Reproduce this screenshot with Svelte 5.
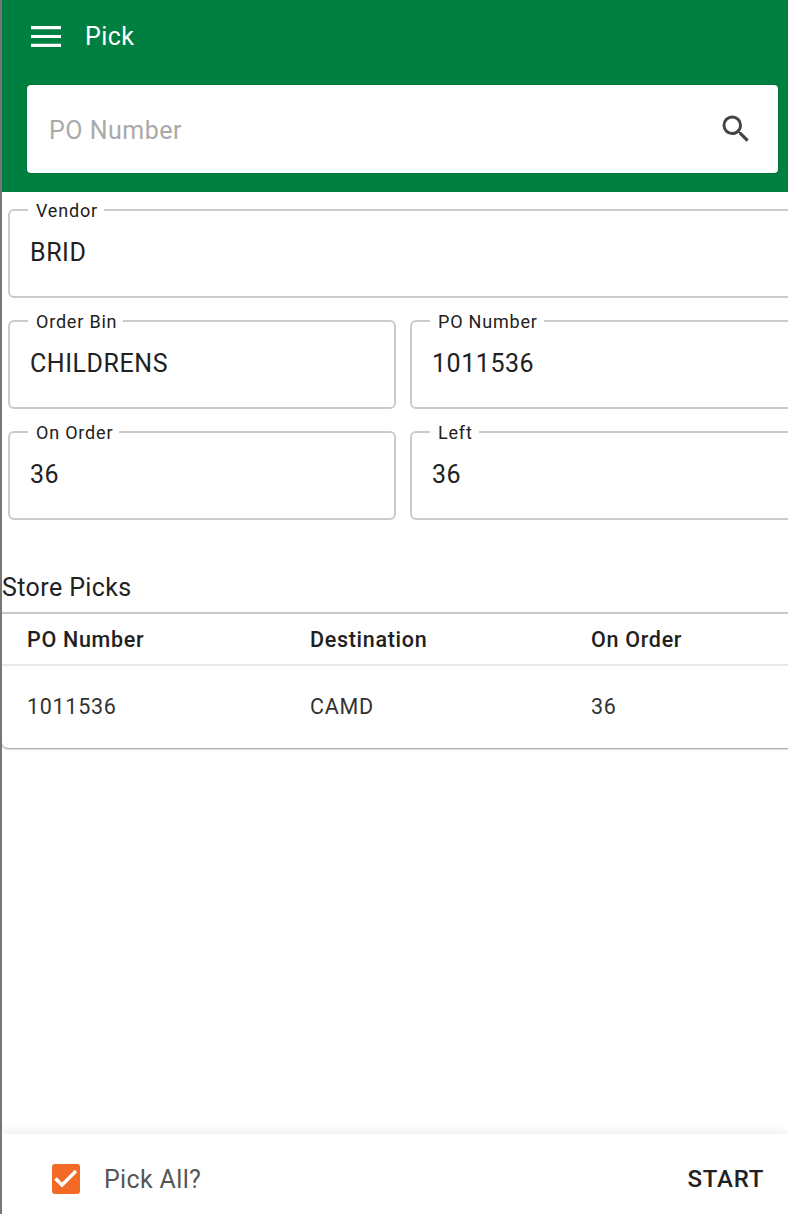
<script>
  let pickAll = $state(true);
  let picks = [{ po: "1011536", dest: "CAMD", onOrder: "36" }];
</script>

<main class="page">
  <header class="top">
    <div class="toolbar">
      <svg class="menu" viewBox="0 0 30 21" width="30" height="21" aria-hidden="true">
        <path d="M0 1.7h30M0 10.5h30M0 19.3h30" stroke="#fff" stroke-width="3.2" fill="none" />
      </svg>
      <span class="title">Pick</span>
    </div>
    <div class="search">
      <span class="placeholder">PO Number</span>
      <svg class="glass" viewBox="0 0 24 24" width="36" height="36" aria-hidden="true">
        <path fill="#444" d="M15.5 14h-.79l-.28-.27A6.47 6.47 0 0 0 16 9.5 6.5 6.5 0 1 0 9.5 16c1.61 0 3.09-.59 4.23-1.57l.27.28v.79l5 4.99L20.49 19l-4.99-5zm-6 0C7.01 14 5 11.99 5 9.5S7.01 5 9.5 5 14 7.01 14 9.5 11.99 14 9.5 14z" />
      </svg>
    </div>
  </header>

  <section class="fields">
    <fieldset class="wide">
      <legend>Vendor</legend>
      <div class="value">BRID</div>
    </fieldset>
    <fieldset>
      <legend>Order Bin</legend>
      <div class="value">CHILDRENS</div>
    </fieldset>
    <fieldset class="bleed">
      <legend>PO Number</legend>
      <div class="value">1011536</div>
    </fieldset>
    <fieldset>
      <legend>On Order</legend>
      <div class="value">36</div>
    </fieldset>
    <fieldset class="bleed">
      <legend>Left</legend>
      <div class="value">36</div>
    </fieldset>
  </section>

  <h2>Store Picks</h2>
  <div class="table">
    <div class="row head">
      <span>PO Number</span>
      <span>Destination</span>
      <span>On Order</span>
    </div>
    {#each picks as p}
      <div class="row body">
        <span>{p.po}</span>
        <span>{p.dest}</span>
        <span>{p.onOrder}</span>
      </div>
    {/each}
  </div>

  <footer class="bottom">
    <button class="check" onclick={() => (pickAll = !pickAll)} aria-label="Pick All?">
      {#if pickAll}
        <svg viewBox="0 0 28 30" width="28" height="30" aria-hidden="true">
          <path d="M3.5 14.5l6.5 6.5L24 7" stroke="#fff" stroke-width="3.4" fill="none" />
        </svg>
      {/if}
    </button>
    <span class="pickall">Pick All?</span>
    <span class="start">START</span>
  </footer>
</main>

<style>
  :global(body) {
    background: #fff;
    overflow: hidden;
  }

  .page {
    position: relative;
    box-sizing: border-box;
    width: 788px;
    height: 1214px;
    overflow: hidden;
    border-left: 2px solid #777;
    font-family: Roboto, "Liberation Sans", sans-serif;
    color: #212121;
    display: flex;
    flex-direction: column;
  }

  /* header */
  .top {
    flex: none;
    height: 192px;
    box-sizing: border-box;
    background: #008040;
    padding-left: 25px;
    padding-right: 10px;
  }
  .toolbar {
    height: 85px;
    display: flex;
    align-items: center;
    box-sizing: border-box;
    padding: 0 0 12px 4px;
  }
  .title {
    margin-left: 24px;
    font-size: 25px;
    font-weight: 400;
    letter-spacing: 0.4px;
    color: #fff;
    line-height: 30px;
  }
  .search {
    height: 88px;
    box-sizing: border-box;
    background: #fff;
    border-radius: 4px;
    padding: 0 24px 0 22px;
    display: flex;
    align-items: center;
    justify-content: space-between;
    box-shadow: 0 0 2px rgba(0, 0, 0, 0.35);
  }
  .placeholder {
    font-size: 25px;
    letter-spacing: 0.5px;
    color: #aaa;
    padding-top: 2px;
  }

  /* fields */
  .fields {
    display: grid;
    grid-template-columns: 388px 400px;
    column-gap: 14px;
    row-gap: 12px;
    padding: 7px 0 0 6px;
  }
  fieldset {
    margin: 0;
    min-width: 0;
    height: 99px;
    box-sizing: border-box;
    border: 2px solid #cbcbcb;
    border-radius: 6px;
    padding: 0 0 0 20px;
  }
  .wide {
    grid-column: 1 / span 2;
    width: 800px;
  }
  .bleed {
    width: 400px;
  }
  legend {
    margin-left: -2px;
    padding: 2px 6px 0 8px;
    font-size: 18px;
    line-height: 20px;
    letter-spacing: 0.8px;
    color: #212121;
  }
  .value {
    font-size: 25px;
    line-height: 30px;
    letter-spacing: 0.55px;
    margin-top: 17px;
    color: #212121;
  }

  /* table */
  h2 {
    margin: 53px 0 0 0;
    font-size: 25px;
    font-weight: 400;
    letter-spacing: 0.4px;
    line-height: 30px;
    color: #212121;
  }
  .table {
    width: 800px;
    margin-top: 9px;
    border-top: 2px solid #c8c8c8;
    border-radius: 0 0 6px 6px;
    box-shadow: 0 1px 2px rgba(0, 0, 0, 0.45);
    height: 136px;
    box-sizing: border-box;
  }
  .row {
    display: grid;
    grid-template-columns: 283px 281px 1fr;
    padding-left: 25px;
    align-items: center;
    letter-spacing: 0.7px;
  }
  .head {
    height: 50px;
    font-size: 21.5px;
    font-weight: 500;
    border-bottom: 2px solid #e8e8e8;
  }
  .body {
    height: 81px;
    font-size: 21.5px;
    color: #333;
  }

  /* footer */
  .bottom {
    margin-top: auto;
    height: 80px;
    box-sizing: border-box;
    display: flex;
    align-items: center;
    padding: 10px 24px 0 50px;
    box-shadow: 0 -3px 10px rgba(0, 0, 0, 0.07);
  }
  .check {
    width: 28px;
    height: 30px;
    padding: 0;
    border: none;
    border-radius: 3px;
    background: #f26a25;
    display: flex;
    align-items: center;
    justify-content: center;
  }
  .pickall {
    margin-left: 24px;
    font-size: 25px;
    letter-spacing: 0.35px;
    color: #555;
  }
  .start {
    margin-left: auto;
    font-size: 24px;
    font-weight: 500;
    letter-spacing: 0.7px;
    color: #212121;
  }
</style>
